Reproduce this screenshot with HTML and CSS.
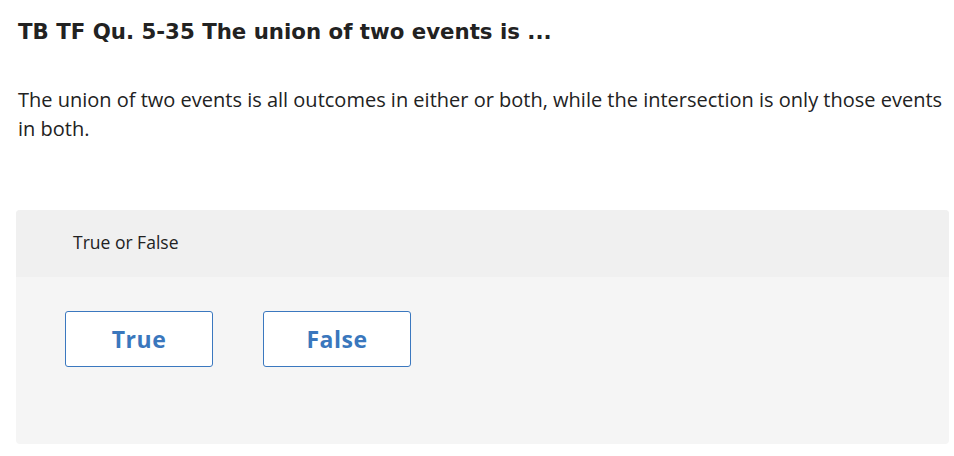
FILE: index.html
```html
<!DOCTYPE html>
<html>
<head>
<meta charset="utf-8">
<link rel="stylesheet" href="styles.css">
</head>
<body>
<div class="page">
  <h1 class="title">TB TF Qu. 5-35 The union of two events is ...</h1>
  <p class="prompt">The union of two events is all outcomes in either or both, while the intersection is only those events in both.</p>
  <div class="card">
    <div class="card-head">True or False</div>
    <div class="card-body">
      <button class="choice">True</button>
      <button class="choice">False</button>
    </div>
  </div>
</div>
</body>
</html>
```
FILE: styles.css
```css
html, body {
  margin: 0;
  padding: 0;
  background: #ffffff;
}
body {
  font-family: "Open Sans", Lato, "Liberation Sans", sans-serif;
  color: #1f1f1f;
}
.page {
  padding: 19px 5px 0 16px;
}
.title {
  margin: 0 0 0 2px;
  font-family: "DejaVu Sans", "Open Sans", sans-serif;
  font-size: 21.3px;
  line-height: 26px;
  font-weight: 700;
  color: #222;
}
.prompt {
  margin: 40px 0 0 2px;
  font-size: 20px;
  line-height: 29px;
  font-weight: 400;
  color: #222;
}
.card {
  margin-top: 67px;
  width: 933px;
  border-radius: 4px;
  overflow: hidden;
  background: #f5f5f5;
}
.card-head {
  height: 67px;
  padding-bottom: 3px;
  box-sizing: border-box;
  background: #f0f0f0;
  padding-left: 57px;
  display: flex;
  align-items: center;
  font-size: 17.5px;
  color: #222;
}
.card-body {
  height: 167px;
  display: flex;
  align-items: flex-start;
  gap: 50px;
  padding: 34px 0 0 49px;
  box-sizing: border-box;
}
.choice {
  width: 148px;
  height: 56px;
  border: 1px solid #3b78bf;
  border-radius: 3px;
  background: #fff;
  color: #3a77bd;
  font-family: inherit;
  font-size: 23px;
  letter-spacing: 0.5px;
  font-weight: 700;
  padding: 0;
  cursor: pointer;
}
```
